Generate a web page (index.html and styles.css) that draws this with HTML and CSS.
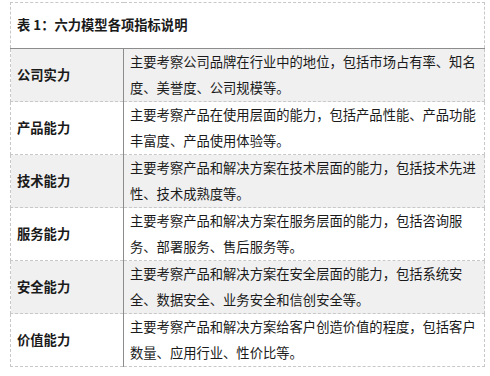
FILE: index.html
```html
<!DOCTYPE html>
<html lang="zh">
<head>
<meta charset="utf-8">
<link rel="stylesheet" href="styles.css">
</head>
<body>
<table class="tbl">
  <colgroup><col class="c1"><col class="c2"></colgroup>
  <thead>
    <tr><th colspan="2" class="title">表 1：六力模型各项指标说明</th></tr>
  </thead>
  <tbody>
    <tr class="alt"><td class="name">公司实力</td><td class="desc">主要考察公司品牌在行业中的地位，包括市场占有率、知名度、美誉度、公司规模等。</td></tr>
    <tr><td class="name">产品能力</td><td class="desc">主要考察产品在使用层面的能力，包括产品性能、产品功能丰富度、产品使用体验等。</td></tr>
    <tr class="alt"><td class="name">技术能力</td><td class="desc">主要考察产品和解决方案在技术层面的能力，包括技术先进性、技术成熟度等。</td></tr>
    <tr><td class="name">服务能力</td><td class="desc">主要考察产品和解决方案在服务层面的能力，包括咨询服务、部署服务、售后服务等。</td></tr>
    <tr class="alt"><td class="name">安全能力</td><td class="desc">主要考察产品和解决方案在安全层面的能力，包括系统安全、数据安全、业务安全和信创安全等。</td></tr>
    <tr><td class="name">价值能力</td><td class="desc">主要考察产品和解决方案给客户创造价值的程度，包括客户数量、应用行业、性价比等。</td></tr>
  </tbody>
</table>
</body>
</html>
```

FILE: styles.css
```css
html, body {
  margin: 0;
  padding: 0;
  background: #ffffff;
}
body {
  padding: 2px 0 0 10px;
  font-family: "Noto Sans CJK SC", "Noto Sans", sans-serif;
  font-size: 13.3px;
  color: #1a1a1a;
}
.tbl {
  border-collapse: collapse;
  width: 474px;
  table-layout: fixed;
}
.c1 { width: 113px; }
.c2 { width: 361px; }
.title {
  text-align: left;
  font-weight: bold;
  line-height: 26px;
  padding: 9px 6px 10px;
  border: 1px dashed #c8c8c8;
  border-bottom: 1px solid #8c8c8c;
}
.tbl td {
  line-height: 26px;
  padding: 0 6px;
  border: 1px dashed #c8c8c8;
  vertical-align: middle;
}
.tbl td.name {
  font-weight: bold;
  border-right: 1px solid #8c8c8c;
}
.tbl td.desc {
  padding-left: 6px;
  padding-right: 4px;
}
.alt td {
  background: #f0f0f0;
}
```
